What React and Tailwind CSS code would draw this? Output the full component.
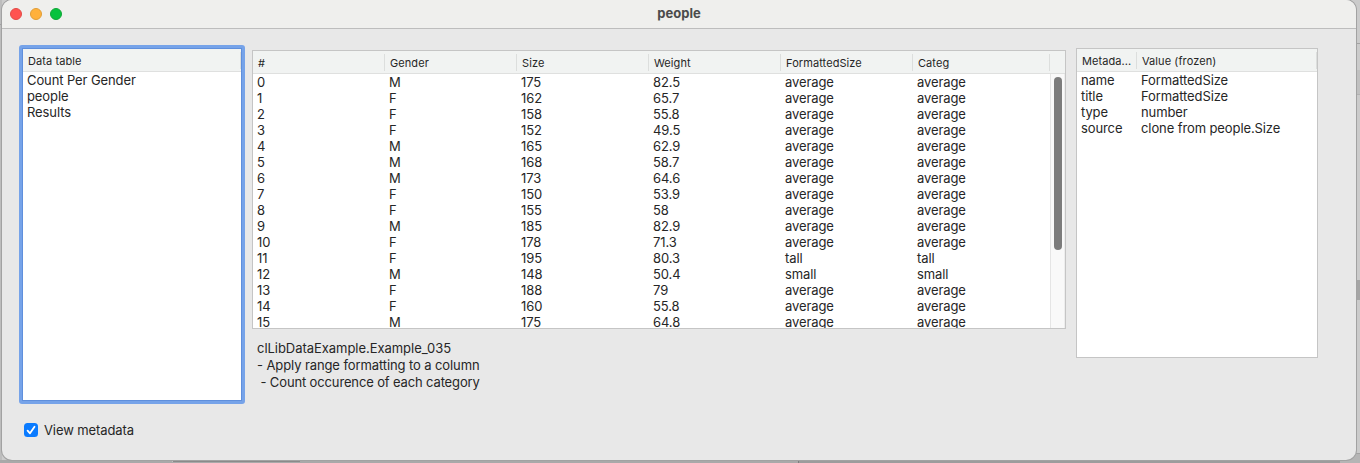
import React from "react";

const columns = ["#", "Gender", "Size", "Weight", "FormattedSize", "Categ"];

const people = [
  ["0", "M", "175", "82.5", "average", "average"],
  ["1", "F", "162", "65.7", "average", "average"],
  ["2", "F", "158", "55.8", "average", "average"],
  ["3", "F", "152", "49.5", "average", "average"],
  ["4", "M", "165", "62.9", "average", "average"],
  ["5", "M", "168", "58.7", "average", "average"],
  ["6", "M", "173", "64.6", "average", "average"],
  ["7", "F", "150", "53.9", "average", "average"],
  ["8", "F", "155", "58", "average", "average"],
  ["9", "M", "185", "82.9", "average", "average"],
  ["10", "F", "178", "71.3", "average", "average"],
  ["11", "F", "195", "80.3", "tall", "tall"],
  ["12", "M", "148", "50.4", "small", "small"],
  ["13", "F", "188", "79", "average", "average"],
  ["14", "F", "160", "55.8", "average", "average"],
  ["15", "M", "175", "64.8", "average", "average"],
];

const metadata = [
  ["name", "FormattedSize"],
  ["title", "FormattedSize"],
  ["type", "number"],
  ["source", "clone from people.Size"],
];

const tables = ["Count Per Gender", "people", "Results"];

function HeaderCell({ className, children }) {
  return (
    <div className={`flex h-[17px] shrink-0 items-center border-r border-[#dcdedd] pt-[2px] pl-[5px] whitespace-nowrap ${className}`}>
      {children}
    </div>
  );
}

function Header({ children }) {
  return (
    <div className="flex h-[23px] shrink-0 items-center border-b border-[#dfe0df] bg-[#f1f3f2] pt-px text-[11px] tracking-[0.08px]">
      {children}
    </div>
  );
}

function TableList() {
  return (
    <div className="h-[359px] w-[226px] rounded-[3px] bg-[#76a3e9] p-[3px]">
      <div className="flex h-full flex-col border border-[#5f8fdc] bg-white">
        <Header>
          <HeaderCell className="w-full">Data table</HeaderCell>
        </Header>
        <div className="pl-1">
          {tables.map((name) => (
            <div key={name} className="h-4 leading-4">{name}</div>
          ))}
        </div>
      </div>
    </div>
  );
}

function PeopleTable() {
  return (
    <div className="flex h-[279px] w-[814px] flex-col overflow-hidden border border-[#c5c5c5] bg-white">
      <Header>
        {columns.map((name, i) => (
          <HeaderCell key={name} className={i === columns.length - 1 ? "w-[137px]" : "w-[132px]"}>
            {name}
          </HeaderCell>
        ))}
      </Header>
      <div className="flex min-h-0 flex-1">
        <div className="flex-1 overflow-hidden pl-1">
          {people.map((row) => (
            <div key={row[0]} className="flex h-4 leading-4">
              {row.map((cell, i) => (
                <div key={i} className="w-[132px] shrink-0">{cell}</div>
              ))}
            </div>
          ))}
        </div>
        <div className="w-[15px] shrink-0 border-x border-l-[#e5e5e5] border-r-[#ededed] bg-[#f9f9f9] pt-[3px] pl-[3px]">
          <div className="h-[173px] w-2 rounded-full bg-[#7c7c7c]" />
        </div>
      </div>
    </div>
  );
}

function MetadataTable() {
  return (
    <div className="flex h-[310px] w-[242px] flex-col border border-[#c5c5c5] bg-white">
      <Header>
        <HeaderCell className="w-[60px]">Metada...</HeaderCell>
        <HeaderCell className="w-[180px]">Value (frozen)</HeaderCell>
      </Header>
      <div className="pl-1">
        {metadata.map(([key, value]) => (
          <div key={key} className="flex h-4 leading-4">
            <div className="w-[60px]">{key}</div>
            <div>{value}</div>
          </div>
        ))}
      </div>
    </div>
  );
}

function Backdrop() {
  return (
    <svg className="absolute inset-0" width="1360" height="463" shapeRendering="crispEdges">
      <rect width="1360" height="463" fill="#cbcbcb" />
      <rect width="2" height="463" fill="#bdbdbd" />
      <rect y="24" width="6" height="1" fill="#a0a0a0" />
      <rect y="460" width="1360" height="3" fill="#a9a9a9" />
      <rect x="172" y="460" width="128" height="2" fill="#c0c0c0" />
      <rect x="173" y="461" width="127" height="1" fill="#8a8a8a" />
      <rect x="798" y="460" width="562" height="3" fill="#9c9c9c" />
      <rect x="798" y="460" width="1" height="3" fill="#7d7d7d" />
      <rect x="1340" y="454" width="20" height="9" fill="#b5b5b5" />
      <rect x="1356" y="43" width="4" height="1" fill="#a3a3a3" />
      <rect x="1356" y="70" width="4" height="24" fill="#c0c0c0" />
      <rect x="1356" y="94" width="4" height="1" fill="#b2b2b2" />
      <rect x="1356" y="280" width="4" height="20" fill="#a5a5a5" />
      <rect x="1340" y="453" width="20" height="1" fill="#a2a2a2" />
    </svg>
  );
}

export default function App() {
  return (
    <div className="relative h-[463px] w-[1360px] overflow-hidden font-['Inter','Liberation_Sans',sans-serif] text-[13px] tracking-[-0.1px] text-[#262626]">
      <Backdrop />
      <div className="relative ml-[2px] flex h-[460px] w-[1354px] flex-col overflow-hidden rounded-[10px] bg-[#e8e8e8] shadow-[0_0_0_1px_#a2a2a2]">
        <div className="flex h-[29px] shrink-0 items-center border-b border-[#bdbdbd] bg-[#efefed]">
          <div className="flex w-[100px] gap-2 pl-2">
            <div className="size-3 rounded-full border border-[#e24b45] bg-[#ff5350]" />
            <div className="size-3 rounded-full border border-[#e09d36] bg-[#ffb13c]" />
            <div className="size-3 rounded-full border border-[#10a636] bg-[#06c23e]" />
          </div>
          <div className="flex-1 pr-[100px] text-center font-bold tracking-normal text-[#4b4b4b]">people</div>
        </div>
        <div className="flex items-start pt-4 pl-[17px]">
          <div>
            <TableList />
            <label className="mt-[19px] ml-[5px] flex items-start">
              <span className="flex size-[14px] items-center justify-center rounded-[3.5px] bg-[#0a7bff]">
                <svg width="14" height="14" viewBox="0 0 14 14" fill="none" stroke="white" strokeWidth="1.8" strokeLinecap="round" strokeLinejoin="round">
                  <path d="M3.6 7.6 6 10.3 10.5 3.8" />
                </svg>
              </span>
              <span className="pl-[6px] leading-[14px]">View metadata</span>
            </label>
          </div>
          <div className="mt-[5px] ml-[7px]">
            <PeopleTable />
            <div className="mt-[11px] pl-[5px] leading-[17px] whitespace-pre">
              <div className="tracking-[-0.04px]">clLibDataExample.Example_035</div>
              <div>- Apply range formatting to a column</div>
              <div className="tracking-[-0.14px]">{" - Count occurence of each category"}</div>
            </div>
          </div>
          <div className="mt-[3px] ml-[10px]">
            <MetadataTable />
          </div>
        </div>
      </div>
    </div>
  );
}
